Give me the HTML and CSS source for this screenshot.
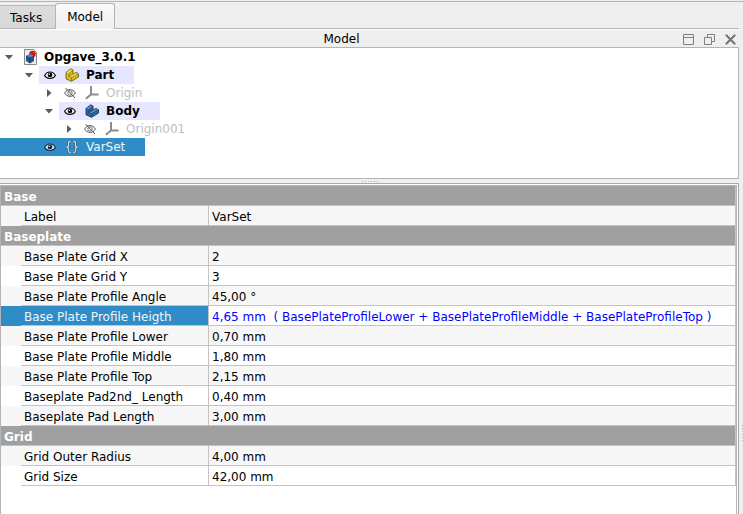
FILE: index.html
```html
<!DOCTYPE html>
<html lang="en">
<head>
<meta charset="utf-8">
<title>Model</title>
<link rel="stylesheet" href="styles.css">
</head>
<body>
<svg class="defs" aria-hidden="true">
  <symbol id="down" viewBox="0 0 8 5"><path d="M0 0h8L4 4.5z" fill="#5c5c5c"/></symbol>
  <symbol id="right" viewBox="0 0 5 8"><path d="M0 0v8L4.5 4z" fill="#5c5c5c"/></symbol>
  <symbol id="eye" viewBox="0 0 12 12">
    <path d="M.6 6.500C3 1.800 9 1.800 11.400 6.500 9 10.500 3 10.500 .6 6.500z" fill="#fff" fill-opacity=".8" stroke="currentColor" stroke-width="1.100"/>
    <circle cx="6" cy="6" r="2.300" fill="currentColor"/><circle cx="5.300" cy="5.200" r=".7" fill="#fff"/>
  </symbol>
  <symbol id="hidden" viewBox="0 0 12 12">
    <path d="M.6 6C3 1.500 9 1.500 11.400 6 9 10.500 3 10.500 .6 6zM1.500 1l9.500 10" fill="none" stroke="#555" stroke-width="1"/>
    <circle cx="6" cy="6" r="2.200" fill="none" stroke="#666" stroke-width=".9"/>
  </symbol>
  <symbol id="axes" viewBox="0 0 14 14">
    <path d="M6 0v8.500H13.500M6 8.500L.8 12.800" fill="none" stroke="#8c8c8c" stroke-width="2"/>
  </symbol>
  <symbol id="solid" viewBox="0 0 14 14">
    <path d="M1 4.500L5.500 .8 8 2v4l3-1.600 2.500 1.400V9L6.500 13.300 1 10.800z" fill="var(--face)" stroke="var(--edge)" stroke-width=".9"/>
    <path d="M1.500 4.600L5.500 1.300 7.500 2.200 3.800 5.600z" fill="var(--top)"/>
    <path d="M4 8.500L11 4.900 13 5.900 6.500 9.700z" fill="var(--top)"/>
    <path d="M3.800 5.600V8.500L6.500 9.700V13M3.800 5.600L8 2.200M4 8.500L8 6M6.500 9.700L13 5.900" fill="none" stroke="var(--edge)" stroke-width=".6"/>
  </symbol>
</svg>
<nav class="tabs" role="tablist">
  <button class="tab" role="tab" aria-selected="false">Tasks</button>
  <button class="tab current" role="tab" aria-selected="true">Model</button>
</nav>
<main class="dock">
  <header class="title">
    <h1>Model</h1>
    <div class="controls">
      <button aria-label="Collapse"><svg viewBox="0 0 11 11"><path d="M.5.5h10v10H.5zM1 3.500h9" fill="none" stroke="#808080"/></svg></button>
      <button aria-label="Float"><svg viewBox="0 0 11 11"><path d="M3.500 3.500V.5h7v7h-3M.5 3.500h7v7H.5z" fill="none" stroke="#808080"/></svg></button>
      <button aria-label="Close"><svg viewBox="0 0 11 11"><path d="M.8 .8l9.400 9.400M10.200 .8L.8 10.200" stroke="#747474" stroke-width="2"/></svg></button>
    </div>
  </header>
  <section class="tree" role="tree" aria-label="Document">
    <div class="node level0" role="treeitem">
      <span class="arrow"><svg class="down"><use href="#down"/></svg></span>
      <span class="item"><svg class="glyph" viewBox="0 0 14 16">
        <path d="M.5 .5h9l3 3v12H.5z" fill="#eee" stroke="#888"/>
        <circle cx="8.500" cy="5" r="3.300" fill="#d41818"/>
        <path d="M2 7l4-2 4 2v5l-4 2.500L2 12z" fill="#28528a"/><path d="M2 7l4-2 4 2-4 2z" fill="#5c8cc4"/><path d="M6 9v5M2 7l4 2 4-2" fill="none" stroke="#142c50" stroke-width=".7"/>
      </svg><b>Opgave_3.0.1</b></span>
    </div>
    <div class="node level1" role="treeitem">
      <span class="arrow"><svg class="down"><use href="#down"/></svg></span>
      <span class="item active"><svg class="eye"><use href="#eye"/></svg><svg class="glyph yellow"><use href="#solid"/></svg><b>Part</b></span>
    </div>
    <div class="node level2" role="treeitem">
      <span class="arrow"><svg class="right"><use href="#right"/></svg></span>
      <span class="item muted"><svg class="eye"><use href="#hidden"/></svg><svg class="glyph"><use href="#axes"/></svg><span>Origin</span></span>
    </div>
    <div class="node level2" role="treeitem">
      <span class="arrow"><svg class="down"><use href="#down"/></svg></span>
      <span class="item active"><svg class="eye"><use href="#eye"/></svg><svg class="glyph blue"><use href="#solid"/></svg><b>Body</b></span>
    </div>
    <div class="node level3" role="treeitem">
      <span class="arrow"><svg class="right"><use href="#right"/></svg></span>
      <span class="item muted"><svg class="eye"><use href="#hidden"/></svg><svg class="glyph"><use href="#axes"/></svg><span>Origin001</span></span>
    </div>
    <div class="node level1 selected" role="treeitem" aria-selected="true">
      <span class="arrow"></span>
      <span class="item"><svg class="eye"><use href="#eye"/></svg><svg class="glyph" viewBox="0 0 14 14">
        <g fill="none"><path id="braces" d="M5.500 1.500H4.500Q3.500 1.500 3.500 3v2.500Q3.500 7 1.500 7 3.500 7 3.500 8.500V11q0 1.500 1 1.500h1M8.500 1.500h1q1 0 1 1.500v2.500Q10.500 7 12.500 7 10.500 7 10.500 8.500V11q0 1.500-1 1.500h-1" stroke="#38586e" stroke-width="2.600"/>
        <path d="M5.500 1.500H4.500Q3.500 1.500 3.500 3v2.500Q3.500 7 1.500 7 3.500 7 3.500 8.500V11q0 1.500 1 1.500h1M8.500 1.500h1q1 0 1 1.500v2.500Q10.500 7 12.500 7 10.500 7 10.500 8.500V11q0 1.500-1 1.500h-1" stroke="#c4dcea" stroke-width="1.300"/></g>
      </svg><span>VarSet</span></span>
    </div>
  </section>
  <div class="splitter" role="separator"><i></i><i></i><i></i><i></i><i></i><i></i></div>
  <section class="properties">
    <div class="inner">
      <table>
        <colgroup><col class="indent-col"><col class="name-col"><col></colgroup>
        <tbody>
          <tr class="group"><th colspan="3" scope="rowgroup">Base</th></tr>
          <tr class="alt"><td class="indent"></td><th scope="row">Label</th><td>VarSet</td></tr>
        </tbody>
        <tbody>
          <tr class="group"><th colspan="3" scope="rowgroup">Baseplate</th></tr>
          <tr class="alt"><td class="indent"></td><th scope="row">Base Plate Grid X</th><td>2</td></tr>
          <tr><td class="indent"></td><th scope="row">Base Plate Grid Y</th><td>3</td></tr>
          <tr class="alt"><td class="indent"></td><th scope="row">Base Plate Profile Angle</th><td>45,00 °</td></tr>
          <tr class="chosen"><td class="indent"></td><th scope="row">Base Plate Profile Heigth</th><td class="expression">4,65 mm&nbsp; ( BasePlateProfileLower + BasePlateProfileMiddle + BasePlateProfileTop )</td></tr>
          <tr class="alt"><td class="indent"></td><th scope="row">Base Plate Profile Lower</th><td>0,70 mm</td></tr>
          <tr><td class="indent"></td><th scope="row">Base Plate Profile Middle</th><td>1,80 mm</td></tr>
          <tr class="alt"><td class="indent"></td><th scope="row">Base Plate Profile Top</th><td>2,15 mm</td></tr>
          <tr><td class="indent"></td><th scope="row">Baseplate Pad2nd_ Length</th><td>0,40 mm</td></tr>
          <tr class="alt"><td class="indent"></td><th scope="row">Baseplate Pad Length</th><td>3,00 mm</td></tr>
        </tbody>
        <tbody>
          <tr class="group"><th colspan="3" scope="rowgroup">Grid</th></tr>
          <tr class="alt"><td class="indent"></td><th scope="row">Grid Outer Radius</th><td>4,00 mm</td></tr>
          <tr><td class="indent"></td><th scope="row">Grid Size</th><td>42,00 mm</td></tr>
        </tbody>
      </table>
    </div>
  </section>
</main>
<div class="grip" role="separator"></div>
</body>
</html>
```
FILE: styles.css
```css
* { box-sizing: border-box; }

body {
  display: flex;
  flex-direction: column;
  height: 100vh;
  margin: 0;
  padding: 1px 4px 0 0;
  overflow: hidden;
  background: #efefef;
  color: #000;
  font: 12px/18px "DejaVu Sans", sans-serif;
  position: relative;
}

body::before {
  content: "";
  flex: none;
  height: 1px;
  margin-right: -4px;
  background: #b4b4b4;
}

button {
  padding: 0;
  border: 0;
  background: none;
  color: inherit;
  font: inherit;
}

svg { display: block; flex: none; }

.defs { position: absolute; width: 0; height: 0; }

/* Tabs */
.tabs {
  display: flex;
  flex: none;
  align-items: flex-end;
  height: 27px;
  border-bottom: 1px solid #b4b4b4;
}

.tab {
  height: 23px;
  padding: 1px 13px 0 10px;
  border-top: 1px solid #b9b9b9;
  background: linear-gradient(#dcdcdc, #d8d8d8);
}

.tab.current {
  height: 26px;
  margin-bottom: -1px;
  padding: 0 11px;
  border: 1px solid #b4b4b4;
  border-bottom: 0;
  border-radius: 3px 3px 0 0;
  background: linear-gradient(#fafafa, #efefef);
}

/* Dock */
.dock {
  display: flex;
  flex: 1;
  flex-direction: column;
  min-height: 0;
}

.title {
  display: grid;
  grid-template-columns: 1fr auto;
  flex: none;
  align-items: center;
  height: 18px;
  border-top: 1px solid #fff;
}

.title h1 {
  margin: 0;
  font-size: 12px;
  font-weight: normal;
  line-height: 18px;
  text-align: center;
}

.controls { display: flex; gap: 10px; padding-right: 3px; }
.controls svg { width: 11px; height: 11px; }

/* Tree */
.tree {
  flex: none;
  border: solid #b4b4b4;
  border-width: 1px 1px 1px 0;
  padding-bottom: 22px;
  background: #fff;
}

.node { display: flex; height: 18px; }
.level1 { padding-left: 20px; }
.level2 { padding-left: 40px; }
.level3 { padding-left: 60px; }

.arrow {
  display: flex;
  align-items: center;
  justify-content: center;
  width: 18px;
  margin-right: 1px;
}

.down { width: 8px; height: 5px; }
.right { width: 5px; height: 8px; }

.item {
  display: flex;
  align-items: center;
  padding: 0 20px 0 5px;
}

.level0 .glyph { height: 16px; }
.eye { width: 12px; height: 12px; margin-right: 9px; }
.glyph { width: 14px; height: 14px; margin-right: 7px; }
.level0 .glyph { margin-right: 6px; }

.active { background: #e6e6ff; }
.muted { color: #bebebe; }

.selected { width: fit-content; background: #308cc6; }
.selected .item { color: #eff6fa; }
.selected .eye { color: #10283a; }

.yellow { --face: #d8bd20; --top: #f5e04c; --edge: #6e6010; }
.blue { --face: #315f98; --top: #5d8fc8; --edge: #17365c; }

/* Splitter */
.splitter {
  display: flex;
  flex: none;
  gap: 2px;
  align-items: center;
  justify-content: center;
  height: 4px;
}

.splitter i { width: 1px; height: 1px; background: #aaa; }

/* Property table */
.properties {
  flex: 1;
  min-height: 0;
  padding: 1px 1px 0 0;
  border: solid #a8a8a8;
  border-width: 1px 1px 0 0;
  background: #fff;
}

.inner {
  height: 100%;
  border: solid #b4b4b4;
  border-width: 1px 1px 0 1px;
}

table {
  width: 100%;
  border-spacing: 0;
  table-layout: fixed;
}

.indent-col { width: 20px; }
.name-col { width: 188px; }

th, td {
  height: 20px;
  padding: 3px 3px 0;
  border: solid #c3c3c3;
  border-width: 0 1px 1px 0;
  font-weight: normal;
  line-height: 16px;
  text-align: left;
  white-space: nowrap;
}

.indent { border: 0; }
.alt { background: #f7f7f7; }

.group th {
  background: #a0a0a0;
  color: #fff;
  font-weight: bold;
}

.chosen .indent, .chosen th { background: #308cc6; color: #eff6fa; }
.expression { color: #00f; }

/* Grip of the window splitter at the right edge */
.grip {
  position: absolute;
  top: 425px;
  right: 0;
  width: 1px;
  height: 16px;
  background: repeating-linear-gradient(#b4b4b4 0 1px, transparent 1px 3px);
}
```
